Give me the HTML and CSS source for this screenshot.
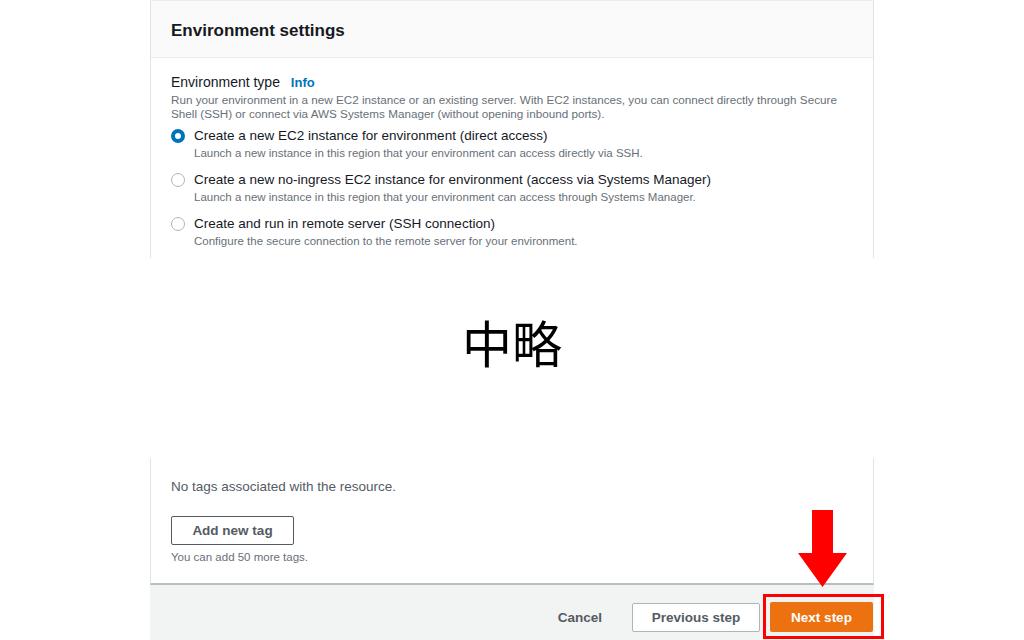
FILE: index.html
```html
<!DOCTYPE html>
<html lang="ja">
<head>
<meta charset="utf-8">
<title>Environment settings</title>
<link rel="stylesheet" href="styles.css">
</head>
<body>
<div class="page">
  <section class="card card-top">
    <header class="card-header">
      <h2 class="card-title">Environment settings</h2>
    </header>
    <div class="card-body">
      <div class="field-label">Environment type <a class="info">Info</a></div>
      <p class="field-desc">Run your environment in a new EC2 instance or an existing server. With EC2 instances, you can connect directly through Secure Shell (SSH) or connect via AWS Systems Manager (without opening inbound ports).</p>
      <div class="radio-group">
        <div class="radio-item">
          <span class="radio checked"></span>
          <div class="radio-text">
            <div class="radio-label">Create a new EC2 instance for environment (direct access)</div>
            <div class="radio-desc">Launch a new instance in this region that your environment can access directly via SSH.</div>
          </div>
        </div>
        <div class="radio-item">
          <span class="radio"></span>
          <div class="radio-text">
            <div class="radio-label">Create a new no-ingress EC2 instance for environment (access via Systems Manager)</div>
            <div class="radio-desc">Launch a new instance in this region that your environment can access through Systems Manager.</div>
          </div>
        </div>
        <div class="radio-item">
          <span class="radio"></span>
          <div class="radio-text">
            <div class="radio-label">Create and run in remote server (SSH connection)</div>
            <div class="radio-desc">Configure the secure connection to the remote server for your environment.</div>
          </div>
        </div>
      </div>
    </div>
  </section>

  <div class="omit">中略</div>

  <section class="card card-bottom">
    <p class="no-tags">No tags associated with the resource.</p>
    <button class="btn btn-normal">Add new tag</button>
    <p class="hint">You can add 50 more tags.</p>
  </section>

  <footer class="actions">
    <button class="btn-link">Cancel</button>
    <button class="btn btn-normal btn-prev">Previous step</button>
    <button class="btn btn-primary">Next step</button>
  </footer>

  <div class="highlight"></div>
  <svg class="arrow" width="50" height="78" viewBox="0 0 50 78">
    <polygon points="14,0 35,0 35,43 49,43 24.5,77 0,43 14,43" fill="#ff0000"/>
  </svg>
</div>
</body>
</html>
```

FILE: styles.css
```css
* { box-sizing: border-box; }
html, body { margin: 0; padding: 0; background: #fff; }
body {
  width: 1024px;
  height: 640px;
  overflow: hidden;
  font-family: "Liberation Sans", Arial, "Noto Sans CJK JP", sans-serif;
  color: #16191f;
}
.page {
  position: relative;
  width: 1024px;
  height: 640px;
  padding-left: 150px;
}
.card {
  width: 724px;
  background: #fff;
  border-left: 1px solid #e1e4e4;
  border-right: 1px solid #e1e4e4;
}
.card-top {
  height: 258px;
  border-top: 1px solid #eaeded;
}
.card-header {
  height: 57px;
  background: #fafafa;
  border-bottom: 1px solid #eaeded;
  padding: 0 20px;
  display: flex;
  align-items: center;
}
.card-title {
  margin: 0;
  font-size: 17px;
  font-weight: 700;
  color: #16191f;
  padding-top: 4px;
}
.card-body {
  padding: 15px 20px 0;
}
.field-label {
  font-size: 14px;
  line-height: 18px;
  color: #16191f;
}
.info {
  color: #0073bb;
  font-weight: 700;
  margin-left: 7px;
  font-size: 13px;
}
.field-desc {
  margin: 1px 0 0;
  font-size: 11.7px;
  line-height: 14px;
  color: #687078;
  width: 672px;
}
.radio-group {
  margin-top: 6px;
  display: flex;
  flex-direction: column;
  gap: 9px;
}
.radio-item {
  display: flex;
  align-items: flex-start;
  gap: 9px;
}
.radio {
  width: 14px;
  height: 14px;
  border-radius: 50%;
  border: 1.5px solid #aab7b8;
  margin-top: 2px;
  flex: none;
}
.radio.checked {
  border: 4px solid #0073bb;
}
.radio-label {
  font-size: 13.5px;
  line-height: 18px;
  color: #16191f;
}
.radio-desc {
  font-size: 11.5px;
  line-height: 17px;
  color: #687078;
}
.omit {
  height: 200px;
  width: 724px;
  display: flex;
  align-items: center;
  justify-content: center;
  font-family: "Noto Sans CJK JP", sans-serif;
  font-size: 50px;
  color: #000;
  padding-bottom: 34px;
}
.card-bottom {
  height: 127px;
  border-bottom: 2px solid #b5bfc0;
  padding: 20px 20px 0;
}
.no-tags {
  margin: 0;
  font-size: 13.5px;
  line-height: 18px;
  color: #545b64;
}
.btn {
  font-family: "Liberation Sans", Arial, sans-serif;
  font-weight: 700;
  font-size: 13.5px;
  border-radius: 2px;
  cursor: pointer;
}
.btn-normal {
  background: #fff;
  color: #545b64;
  border: 1px solid #545b64;
  height: 29px;
  padding: 0 19px;
}
.card-bottom .btn-normal {
  margin-top: 20px;
  width: 123px;
}
.hint {
  margin: 5px 0 0;
  font-size: 11.5px;
  line-height: 14px;
  color: #687078;
}
.actions {
  width: 724px;
  height: 56px;
  background: #f2f3f3;
  display: flex;
  align-items: center;
  justify-content: flex-end;
  padding-right: 1px;
  padding-top: 8px;
}
.btn-link {
  background: none;
  border: none;
  font-family: "Liberation Sans", Arial, sans-serif;
  font-weight: 700;
  font-size: 13.5px;
  color: #545b64;
  padding: 0;
  margin-right: 30px;
}
.btn-prev {
  width: 128px;
  height: 29px;
  border-color: #aab7b8;
  padding: 0;
  margin-right: 10px;
}
.btn-primary {
  width: 103px;
  height: 30px;
  background: #ec7211;
  color: #fff;
  border: none;
  padding: 0;
}
.highlight {
  position: absolute;
  left: 763px;
  top: 594px;
  width: 121px;
  height: 45px;
  border: 3px solid #ff0000;
}
.arrow {
  position: absolute;
  left: 798px;
  top: 510px;
}
```
